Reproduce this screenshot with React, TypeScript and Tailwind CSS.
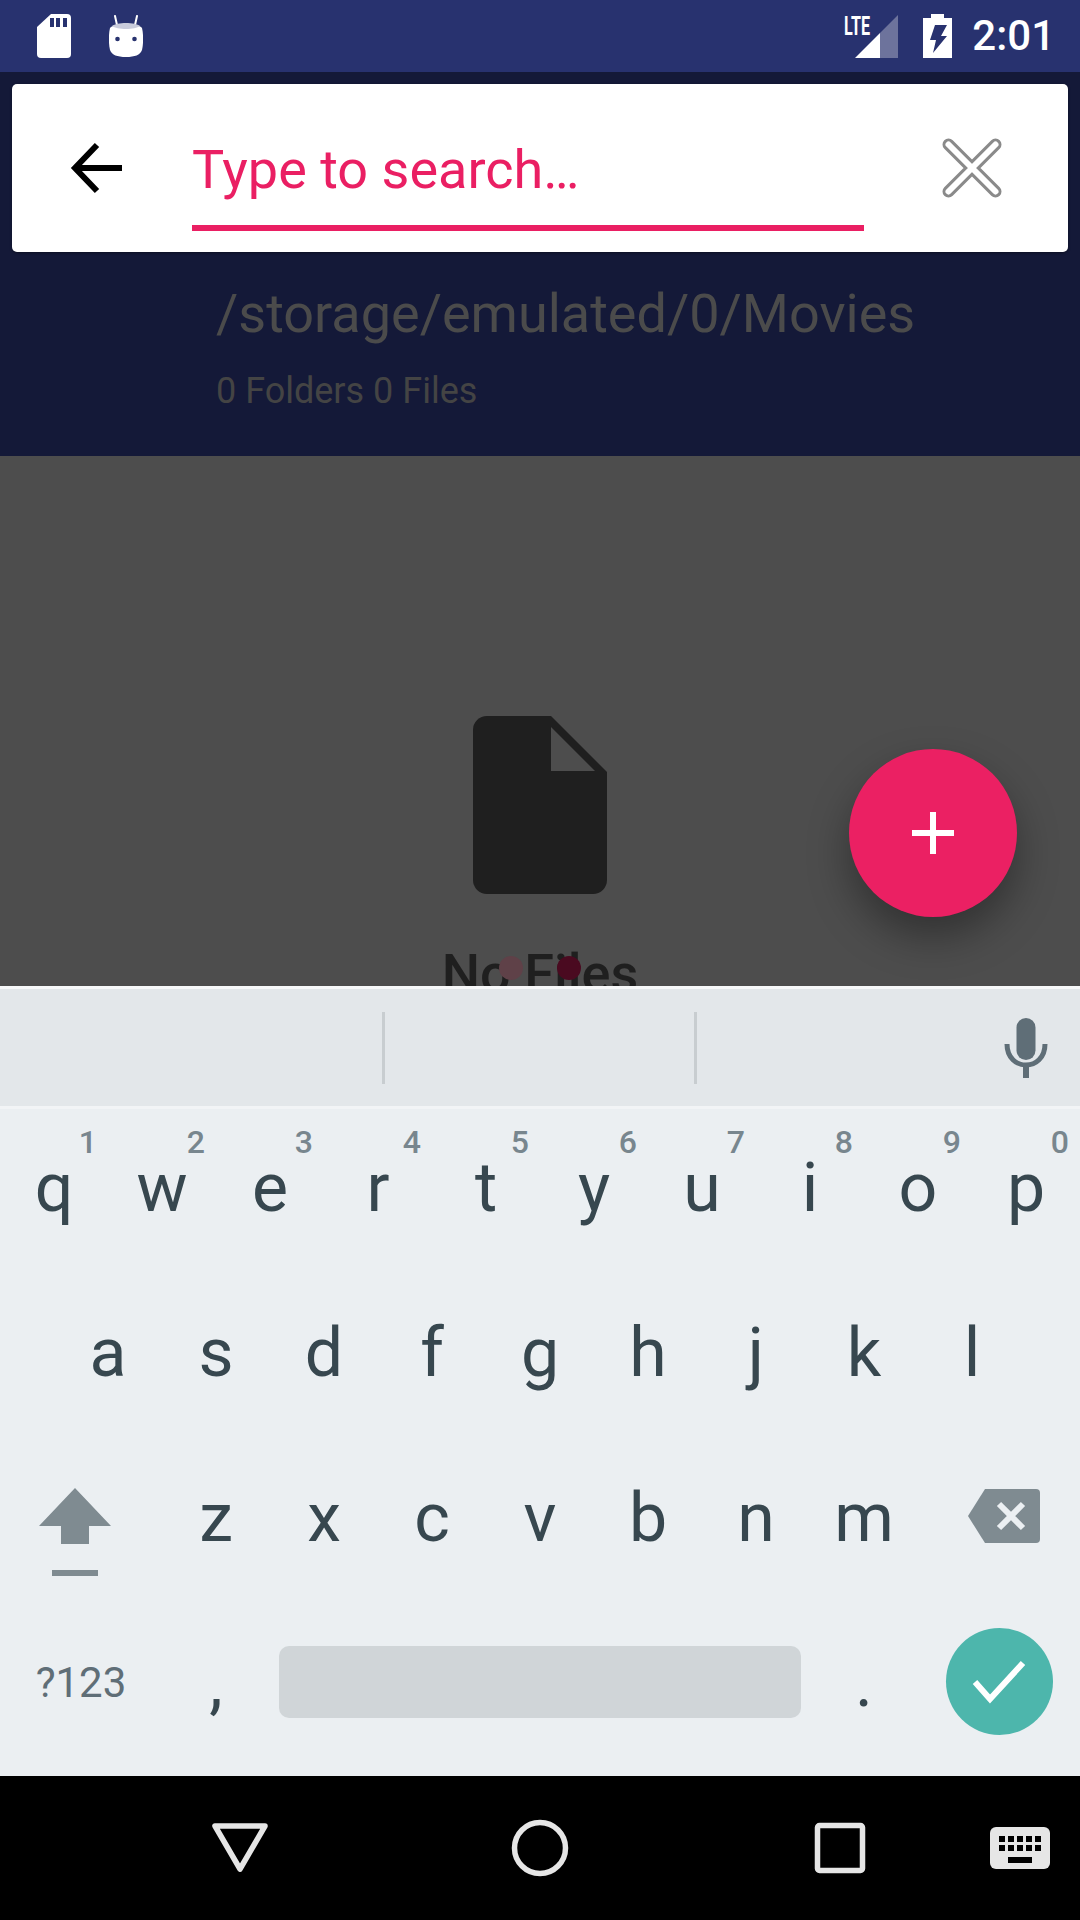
import { Fragment } from 'react'

const rowOne = [
  ['q', '1'],
  ['w', '2'],
  ['e', '3'],
  ['r', '4'],
  ['t', '5'],
  ['y', '6'],
  ['u', '7'],
  ['i', '8'],
  ['o', '9'],
  ['p', '0'],
]
const rowTwo = ['a', 's', 'd', 'f', 'g', 'h', 'j', 'k', 'l']
const rowThree = ['z', 'x', 'c', 'v', 'b', 'n', 'm']

function Key({ label, hint }: { label: string; hint?: string }) {
  return (
    <div className="relative w-[108px] h-full shrink-0 pt-[39px] text-center text-[68px] leading-[80px] text-[#37474f]">
      {hint && (
        <span className="absolute right-[11px] top-[17px] text-[32px] leading-[32px] font-medium text-[#78868e]">
          {hint}
        </span>
      )}
      {label}
    </div>
  )
}

function StatusBar() {
  return (
    <div className="h-[72px] shrink-0 bg-[#28326f] flex items-center relative">
      <svg className="ml-[37px] w-[34px] h-[44px]" viewBox="0 0 34 44">
        <path d="M14 0h16a4 4 0 0 1 4 4v36a4 4 0 0 1-4 4H4a4 4 0 0 1-4-4V13z" fill="#fff" />
        <path d="M13 4h4v9h-4zM19 4h4v9h-4zM26 4h4v9h-4z" fill="#28326f" />
      </svg>
      <svg className="ml-[38px] w-[34px] h-[42px]" viewBox="0 0 34 42">
        <path d="M6 1l2 9M28 1l-2 9" stroke="#fff" strokeWidth="2" strokeLinecap="round" />
        <path d="M1 13c4-5 28-5 32 0 1.500 6 1.500 16 0 22-2 5-7 7-16 7s-14-2-16-7c-1.500-6-1.500-16 0-22z" fill="#fff" />
        <path d="M3 11c5-4 23-4 28 0-5 4-23 4-28 0z" fill="#c9ccdc" />
        <circle cx="8.500" cy="24" r="2.300" fill="#28326f" />
        <circle cx="25.500" cy="24" r="2.300" fill="#28326f" />
      </svg>
      <div className="ml-auto flex items-center">
        <div className="relative w-[54px] h-[43px]">
          <span className="absolute left-0 top-[-4px] text-[26px] leading-[30px] font-bold text-white scale-x-[0.62] origin-left">
            LTE
          </span>
          <svg className="absolute left-[11px] top-0 w-[43px] h-[43px]" viewBox="0 0 43 43">
            <path d="M43 0v43H25V18z" fill="#6d739c" />
            <path d="M25 18v25H0z" fill="#fff" />
          </svg>
        </div>
        <svg className="ml-[25px] w-[29px] h-[44px]" viewBox="0 0 29 44">
          <path d="M8 0h13v4h8v40H0V4h8z" fill="#fff" />
          <path d="M12 11h12l-6 11h6L10 39l3-13H7z" fill="#28326f" />
        </svg>
        <span className="ml-[20px] mr-[25px] text-[42px] leading-[48px] font-medium text-white">2:01</span>
      </div>
    </div>
  )
}

function SearchCard() {
  return (
    <div className="mx-[12px] h-[168px] rounded-[5px] bg-white flex items-start shadow-[0_1px_3px_rgba(0,0,0,0.4)]">
      <svg className="ml-[50px] mt-[48px] w-[72px] h-[72px]" viewBox="0 0 72 72">
        <path d="M60 36H15M35 13L13 36l22 23" fill="none" stroke="#000" strokeWidth="6" />
      </svg>
      <div className="ml-[58px] w-[672px] h-[147px] border-b-[6px] border-[#ea1f63] pt-[54px] text-[54px] leading-[64px] text-[#ea1f63]">
        Type to search…
      </div>
      <svg className="ml-[72px] mt-[48px] w-[72px] h-[72px]" viewBox="0 0 72 72">
        <path d="M12.500 12.500l47 47M59.500 12.500l-47 47" stroke="#8a8a8a" strokeWidth="12" strokeLinecap="round" />
        <path d="M12.500 12.500l47 47M59.500 12.500l-47 47" stroke="#fff" strokeWidth="6" strokeLinecap="round" />
      </svg>
    </div>
  )
}

function Keyboard() {
  return (
    <div className="shrink-0 flex flex-col">
      <div className="h-[3px] bg-[#f7f8f9]" />
      <div className="h-[117px] bg-[#e3e7ea] flex items-center relative">
        <div className="ml-[382px] w-[3px] h-[72px] bg-[#c8cdd0]" />
        <div className="ml-[309px] w-[3px] h-[72px] bg-[#c8cdd0]" />
        <svg className="ml-auto mr-[29px] w-[48px] h-[60px]" viewBox="0 0 48 60">
          <rect x="13.500" y="0" width="19" height="42" rx="9.500" fill="#5f6e77" />
          <path d="M4 26c0 28 38 28 38 0" fill="none" stroke="#5f6e77" strokeWidth="5" />
          <path d="M23 46v14" stroke="#5f6e77" strokeWidth="6" />
        </svg>
      </div>
      <div className="h-[3px] bg-[#f2f4f6]" />
      <div className="bg-[#ebeff2] flex flex-col">
        <div className="h-[165px] flex">
          {rowOne.map(([label, hint]) => (
            <Key key={label} label={label} hint={hint} />
          ))}
        </div>
        <div className="h-[165px] flex pl-[54px]">
          {rowTwo.map((label) => (
            <Key key={label} label={label} />
          ))}
        </div>
        <div className="h-[165px] flex">
          <div className="w-[162px] h-full pt-[49px] pr-[12px] flex flex-col items-center">
            <svg className="w-[72px] h-[56px]" viewBox="0 0 72 56">
              <path d="M36 0l36 38H50v18H22V38H0z" fill="#7f8b91" />
            </svg>
            <div className="mt-[26px] w-[46px] h-[6px] bg-[#7f8b91]" />
          </div>
          {rowThree.map((label) => (
            <Key key={label} label={label} />
          ))}
          <div className="w-[162px] h-full pt-[50px] pl-[10px] flex justify-center">
            <svg className="w-[72px] h-[54px]" viewBox="0 0 72 54">
              <path d="M17 0h51a4 4 0 0 1 4 4v46a4 4 0 0 1-4 4H17L0 27z" fill="#7f8b91" />
              <path d="M31 15l24 24M55 15L31 39" stroke="#ebeff2" strokeWidth="6" />
            </svg>
          </div>
        </div>
        <div className="h-[172px] flex">
          <div className="w-[162px] h-full pt-[54px] text-center text-[42px] leading-[50px] text-[#5f6e77]">
            ?123
          </div>
          <Key label="," />
          <div className="w-[540px] h-full pt-[42px] px-[9px]">
            <div className="h-[72px] rounded-[10px] bg-[#d0d5d8]" />
          </div>
          <Key label="." />
          <div className="w-[162px] h-full pt-[24px] flex justify-center">
            <div className="w-[107px] h-[107px] rounded-full bg-[#4db6ac] flex items-center justify-center">
              <svg className="w-[54px] h-[44px]" viewBox="0 0 54 44">
                <path d="M3 22l15 17L51 3" fill="none" stroke="#fff" strokeWidth="6" />
              </svg>
            </div>
          </div>
        </div>
      </div>
    </div>
  )
}

function NavBar() {
  return (
    <div className="h-[144px] shrink-0 bg-black flex items-center relative">
      <svg className="ml-[210px] w-[60px] h-[52px]" viewBox="0 0 60 52">
        <path d="M5 4h50L30 47z" fill="none" stroke="#e6e6e6" strokeWidth="5.500" strokeLinejoin="round" />
      </svg>
      <svg className="ml-[240px] w-[60px] h-[60px]" viewBox="0 0 60 60">
        <circle cx="30" cy="30" r="25.500" fill="none" stroke="#e6e6e6" strokeWidth="5.500" />
      </svg>
      <svg className="ml-[244px] w-[52px] h-[52px]" viewBox="0 0 52 52">
        <rect x="3.500" y="3.500" width="45" height="45" rx="2" fill="none" stroke="#e6e6e6" strokeWidth="5.500" />
      </svg>
      <svg className="ml-[124px] w-[60px] h-[42px]" viewBox="0 0 60 42">
        <rect width="60" height="42" rx="6" fill="#e6e6e6" />
        {[9, 18, 27, 36, 45].map((x) => (
          <Fragment key={x}>
            <rect x={x} y="9" width="6" height="6" fill="#000" />
            <rect x={x} y="18" width="6" height="6" fill="#000" />
          </Fragment>
        ))}
        <rect x="18" y="30" width="24" height="6" fill="#000" />
      </svg>
    </div>
  )
}

export default function App() {
  return (
    <div className="w-[1080px] h-[1920px] flex flex-col overflow-hidden font-['Roboto',sans-serif]">
      <StatusBar />
      <div className="h-[384px] shrink-0 bg-[#141938] pt-[12px]">
        <SearchCard />
        <div className="pl-[216px] pt-[30px] text-[54px] leading-[64px] text-[#4b4b4b]">/storage/emulated/0/Movies</div>
        <div className="pl-[216px] pt-[24px] text-[36px] leading-[42px] text-[#444444]">0 Folders 0 Files</div>
      </div>
      <div className="relative h-[530px] shrink-0 overflow-hidden bg-[#4d4d4d] flex flex-col items-center pt-[260px]">
        <svg className="w-[134px] h-[178px] shrink-0" viewBox="0 0 134 178">
          <path d="M14 0h64l56 56v108a14 14 0 0 1-14 14H14a14 14 0 0 1-14-14V14A14 14 0 0 1 14 0z" fill="#1f1f1f" />
          <path d="M78 11v44h44z" fill="#4d4d4d" />
        </svg>
        <div className="mt-[52px] text-[54px] leading-[56px] font-medium text-[#1f1f1f] whitespace-nowrap">No Files</div>
        <div className="absolute left-[499px] top-[500px] w-[24px] h-[24px] rounded-full bg-[#5f4148]" />
        <div className="absolute left-[557px] top-[500px] w-[24px] h-[24px] rounded-full bg-[#4a0a20]" />
        <div className="absolute left-[849px] top-[293px] w-[168px] h-[168px] rounded-full bg-[#eb2063] flex items-center justify-center shadow-[0_20px_40px_rgba(0,0,0,0.35)]">
          <svg className="w-[42px] h-[42px]" viewBox="0 0 42 42">
            <path d="M21 0v42M0 21h42" stroke="#fff" strokeWidth="6" />
          </svg>
        </div>
      </div>
      <Keyboard />
      <NavBar />
    </div>
  )
}
